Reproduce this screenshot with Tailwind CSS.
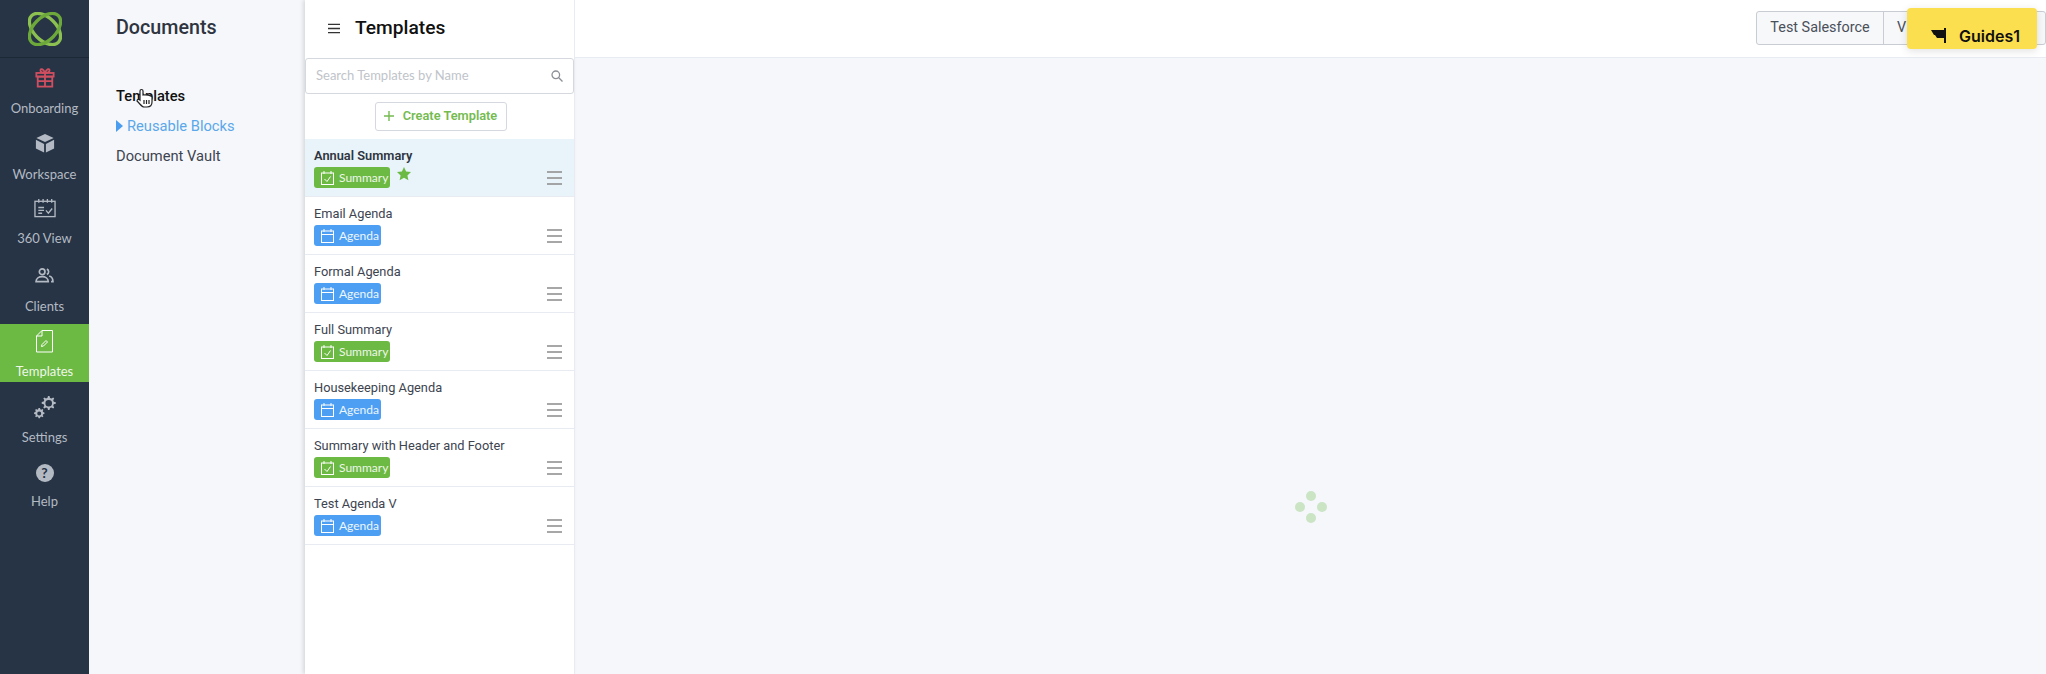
<!DOCTYPE html>
<html lang="en">
<head>
    <meta charset="UTF-8">
    <title>Templates</title>
    <script src="https://cdn.jsdelivr.net/npm/@tailwindcss/browser@4"></script>
</head>
<body class="overflow-hidden">
    <div class="relative flex h-[674px] w-[2046px] overflow-hidden bg-[#f5f7fb] font-['Roboto',sans-serif]">

        <!-- main nav -->
        <nav class="flex w-[89px] shrink-0 flex-col bg-[#263445] font-['Lato',sans-serif] text-[13px] text-[#b4bac3]">
            <div class="flex h-[58px] items-center justify-center border-b border-[#1c2836]">
                <svg width="34" height="34" viewBox="0 0 36 36" fill="none">
                    <ellipse cx="18" cy="18" rx="20" ry="12" transform="rotate(45 18 18)" stroke="#8cc152" stroke-width="3.500"/>
                    <ellipse cx="18" cy="18" rx="20" ry="12" transform="rotate(-45 18 18)" stroke="#6da83a" stroke-width="3.500"/>
                </svg>
            </div>
            <a class="flex h-[68px] flex-col items-center pt-[9px]">
                <svg width="20" height="21" viewBox="0 0 22 22" fill="none" stroke="#cf4f60" stroke-width="2">
                    <rect x="1.500" y="6" width="19" height="4"/><rect x="3" y="10" width="16" height="11"/><path d="M11 6v15M3 15h16M11 6C8 6 6 5 6 3s3-2 5 3c2-5 5-5 5-3s-2 3-5 3z"/>
                </svg>
                <span class="mt-[11px] leading-[18px]">Onboarding</span>
            </a>
            <a class="flex h-[66px] flex-col items-center pt-[7px]">
                <svg width="20" height="20" viewBox="0 0 22 22" fill="#b4bac3">
                    <path d="M11 1l9.500 4.500L11 10 1.500 5.500z"/><path d="M1 7.500l9 4.500v9.500l-9-4.500zM21 7.500L12 12v9.500l9-4.500z"/>
                </svg>
                <span class="mt-[12px] leading-[18px]">Workspace</span>
            </a>
            <a class="flex h-[66px] flex-col items-center pt-[6px]">
                <svg width="22" height="20" viewBox="0 0 23 20" fill="none" stroke="#b4bac3" stroke-width="1.400">
                    <rect x="1" y="3" width="21" height="16"/><path d="M5 0.500v4M9.500 0.500v4M14 0.500v4M18.500 0.500v4M4.500 9.500h6M4.500 12.500h6M4.500 15.500h4M12.500 12.500l2.500 3 4-5"/>
                </svg>
                <span class="mt-[11px] leading-[18px]">360 View</span>
            </a>
            <a class="flex h-[66px] flex-col items-center pt-[10px]">
                <svg width="19" height="15" viewBox="0 0 20 16" fill="none" stroke="#b4bac3" stroke-width="1.800">
                    <circle cx="7.500" cy="4" r="3"/><path d="M1 14.500c0-7 13-7 13 0zM12.500 1.200a3 3 0 010 5.600M15 8.500c2 .5 4 2 4 6h-2"/>
                </svg>
                <span class="mt-[14px] leading-[18px]">Clients</span>
            </a>
            <a class="flex h-[58px] flex-col items-center bg-[#6cb944] pt-[6px] text-white">
                <svg width="17" height="23" viewBox="0 0 17 23" fill="none" stroke="#fff" stroke-width="1">
                    <path d="M6 .5h10.500v21.500H.5V6zM6 .5V6H.5M6 14.500l4-4 1.500 1.500-4 4-2 .5z"/>
                </svg>
                <span class="mt-[9px] leading-[18px] text-[#eef7e8]">Templates</span>
            </a>
            <a class="flex h-[66px] flex-col items-center pt-[14px]">
                <svg width="23" height="23" viewBox="0 0 23 23" fill="#b4bac3">
                    <path fill-rule="evenodd" d="M15 0h1.500l.5 2 1.500.6 1.700-1 1 1-1 1.700.6 1.500 2 .5v1.500l-2 .5-.6 1.500 1 1.700-1 1-1.700-1-1.500.6-.5 2H15l-.5-2-1.500-.6-1.700 1-1-1 1-1.700-.6-1.500-2-.5V6.100l2-.5.6-1.500-1-1.700 1-1 1.700 1 1.500-.6zm.7 4a3.300 3.300 0 100 6.600 3.300 3.300 0 000-6.600z"/>
                    <path fill-rule="evenodd" d="M4.500 13h1.500l.3 1.300 1 .4 1.100-.7 1 1-.7 1.100.4 1 1.300.3v1.500l-1.300.3-.4 1 .7 1.100-1 1-1.100-.7-1 .4-.3 1.300H4.500l-.3-1.300-1-.4-1.100.7-1-1 .7-1.100-.4-1-1.300-.3v-1.500l1.300-.3.4-1-.7-1.100 1-1 1.100.7 1-.4zm.7 3.500a2 2 0 100 4 2 2 0 000-4z" transform="translate(1 -1)"/>
                </svg>
                <span class="mt-[9px] leading-[18px]">Settings</span>
            </a>
            <a class="flex h-[66px] flex-col items-center pt-[16px]">
                <span class="flex h-[18px] w-[18px] items-center justify-center rounded-full bg-[#b4bac3] text-[14px] leading-none font-bold text-[#263445]">?</span>
                <span class="mt-[10px] leading-[18px]">Help</span>
            </a>
        </nav>

        <!-- documents column -->
        <aside class="w-[216px] shrink-0 pl-[27px] text-[14.700px] text-[#3d4450]">
            <h1 class="pt-[14px] text-[19.700px] leading-[27px] font-medium text-[#2e3540]">Documents</h1>
            <ul class="mt-[40px] flex flex-col">
                <li class="h-[30px] leading-[30px] font-medium text-[#111]">Templates</li>
                <li class="flex h-[30px] items-center text-[#5aa7ea]"><span class="mr-[4px] h-0 w-0 border-y-[6px] border-l-[7px] border-y-transparent border-l-[#4a9cf0]"></span>Reusable Blocks</li>
                <li class="h-[30px] leading-[30px]">Document Vault</li>
            </ul>
        </aside>

        <!-- templates list -->
        <section class="flex w-[270px] shrink-0 flex-col border-r border-[#e8ebf1] bg-white shadow-[-2px_0_4px_rgba(0,0,0,0.12)]">
            <header class="flex h-[58px] shrink-0 items-center pb-[2px] pl-[23px]">
                <svg width="12" height="11" viewBox="0 0 13 11" stroke="#333" stroke-width="1.500"><path d="M0 1h13M0 5.500h13M0 10h13"/></svg>
                <h2 class="ml-[15px] text-[19.200px] font-medium text-[#111]">Templates</h2>
            </header>
            <div class="flex h-[36px] shrink-0 items-center justify-between rounded-[3px] border border-[#d5d8de] pr-[10px] pl-[10px] font-['Lato',sans-serif] text-[13px] text-[#c0c4ca]">
                <span>Search Templates by Name</span>
                <svg width="12" height="12" viewBox="0 0 12 12" fill="none" stroke="#8b9097" stroke-width="1.300"><circle cx="4.800" cy="4.800" r="3.800"/><path d="M7.800 7.800L11.500 11.500"/></svg>
            </div>
            <div class="flex h-[45px] shrink-0 items-center justify-center pb-[1px] pl-[2px]">
                <button class="flex h-[29px] w-[132px] items-center justify-center rounded-[3px] border border-[#d5d8de] text-[12.800px] font-semibold text-[#74bb50]">
                    <svg class="mr-[9px]" width="10" height="10" viewBox="0 0 10 10" stroke="#74bb50" stroke-width="1.400"><path d="M5 0v10M0 5h10"/></svg>
                    Create Template
                </button>
            </div>

            <ul class="text-[12.800px] text-[#3d4450]">
                <li class="flex h-[58px] items-end justify-between border-b border-[#e8ebf1] bg-[#e8f3fa] pr-[12px] pb-[8px] pl-[9px]">
                    <div>
                        <p class="mb-[1px] leading-[20px] font-semibold text-[#2e3540]">Annual Summary</p>
                        <div class="flex items-start">
                            <span class="flex h-[21px] w-[76px] items-center rounded-[3px] bg-[#6cb944] pl-[7px] font-['Lato',sans-serif] text-[12px] text-[#eef7e8]">
                                <svg class="mr-[5px]" width="13" height="14" viewBox="0 0 13 14" fill="none" stroke="#fff"><rect x=".5" y="2" width="12" height="11.500"/><path d="M3 0v3M10 0v3M3.500 8l2.500 2.500 3.500-5"/></svg>
                                Summary
                            </span>
                            <svg class="ml-[7px]" width="14" height="14" viewBox="0 0 14 14" fill="#6cb944"><path d="M7 0l2.100 4.500 4.900.6-3.600 3.300 1 4.800L7 10.800 2.600 13.200l1-4.800L0 5.100l4.900-.6z"/></svg>
                        </div>
                    </div>
                    <svg class="mb-[3px]" width="15" height="14" viewBox="0 0 15 14" stroke="#8b8b8b" stroke-width="1.300"><path d="M0 1h15M0 7h15M0 13h15"/></svg>
                </li>
                <li class="flex h-[58px] items-end justify-between border-b border-[#e8ebf1] pr-[12px] pb-[8px] pl-[9px]">
                    <div>
                        <p class="mb-[1px] leading-[20px]">Email Agenda</p>
                        <span class="flex h-[21px] w-[67px] items-center rounded-[3px] bg-[#4c9ff2] pl-[7px] font-['Lato',sans-serif] text-[12px] text-[#eef6fe]">
                            <svg class="mr-[5px]" width="13" height="14" viewBox="0 0 13 14" fill="none" stroke="#fff"><rect x=".5" y="2" width="12" height="11.500"/><path d="M3 0v3M10 0v3M.5 5.500h12"/></svg>
                            Agenda
                        </span>
                    </div>
                    <svg class="mb-[3px]" width="15" height="14" viewBox="0 0 15 14" stroke="#8b8b8b" stroke-width="1.300"><path d="M0 1h15M0 7h15M0 13h15"/></svg>
                </li>
                <li class="flex h-[58px] items-end justify-between border-b border-[#e8ebf1] pr-[12px] pb-[8px] pl-[9px]">
                    <div>
                        <p class="mb-[1px] leading-[20px]">Formal Agenda</p>
                        <span class="flex h-[21px] w-[67px] items-center rounded-[3px] bg-[#4c9ff2] pl-[7px] font-['Lato',sans-serif] text-[12px] text-[#eef6fe]">
                            <svg class="mr-[5px]" width="13" height="14" viewBox="0 0 13 14" fill="none" stroke="#fff"><rect x=".5" y="2" width="12" height="11.500"/><path d="M3 0v3M10 0v3M.5 5.500h12"/></svg>
                            Agenda
                        </span>
                    </div>
                    <svg class="mb-[3px]" width="15" height="14" viewBox="0 0 15 14" stroke="#8b8b8b" stroke-width="1.300"><path d="M0 1h15M0 7h15M0 13h15"/></svg>
                </li>
                <li class="flex h-[58px] items-end justify-between border-b border-[#e8ebf1] pr-[12px] pb-[8px] pl-[9px]">
                    <div>
                        <p class="mb-[1px] leading-[20px]">Full Summary</p>
                        <span class="flex h-[21px] w-[76px] items-center rounded-[3px] bg-[#6cb944] pl-[7px] font-['Lato',sans-serif] text-[12px] text-[#eef7e8]">
                            <svg class="mr-[5px]" width="13" height="14" viewBox="0 0 13 14" fill="none" stroke="#fff"><rect x=".5" y="2" width="12" height="11.500"/><path d="M3 0v3M10 0v3M3.500 8l2.500 2.500 3.500-5"/></svg>
                            Summary
                        </span>
                    </div>
                    <svg class="mb-[3px]" width="15" height="14" viewBox="0 0 15 14" stroke="#8b8b8b" stroke-width="1.300"><path d="M0 1h15M0 7h15M0 13h15"/></svg>
                </li>
                <li class="flex h-[58px] items-end justify-between border-b border-[#e8ebf1] pr-[12px] pb-[8px] pl-[9px]">
                    <div>
                        <p class="mb-[1px] leading-[20px]">Housekeeping Agenda</p>
                        <span class="flex h-[21px] w-[67px] items-center rounded-[3px] bg-[#4c9ff2] pl-[7px] font-['Lato',sans-serif] text-[12px] text-[#eef6fe]">
                            <svg class="mr-[5px]" width="13" height="14" viewBox="0 0 13 14" fill="none" stroke="#fff"><rect x=".5" y="2" width="12" height="11.500"/><path d="M3 0v3M10 0v3M.5 5.500h12"/></svg>
                            Agenda
                        </span>
                    </div>
                    <svg class="mb-[3px]" width="15" height="14" viewBox="0 0 15 14" stroke="#8b8b8b" stroke-width="1.300"><path d="M0 1h15M0 7h15M0 13h15"/></svg>
                </li>
                <li class="flex h-[58px] items-end justify-between border-b border-[#e8ebf1] pr-[12px] pb-[8px] pl-[9px]">
                    <div>
                        <p class="mb-[1px] leading-[20px]">Summary with Header and Footer</p>
                        <span class="flex h-[21px] w-[76px] items-center rounded-[3px] bg-[#6cb944] pl-[7px] font-['Lato',sans-serif] text-[12px] text-[#eef7e8]">
                            <svg class="mr-[5px]" width="13" height="14" viewBox="0 0 13 14" fill="none" stroke="#fff"><rect x=".5" y="2" width="12" height="11.500"/><path d="M3 0v3M10 0v3M3.500 8l2.500 2.500 3.500-5"/></svg>
                            Summary
                        </span>
                    </div>
                    <svg class="mb-[3px]" width="15" height="14" viewBox="0 0 15 14" stroke="#8b8b8b" stroke-width="1.300"><path d="M0 1h15M0 7h15M0 13h15"/></svg>
                </li>
                <li class="flex h-[58px] items-end justify-between border-b border-[#e8ebf1] pr-[12px] pb-[8px] pl-[9px]">
                    <div>
                        <p class="mb-[1px] leading-[20px]">Test Agenda V</p>
                        <span class="flex h-[21px] w-[67px] items-center rounded-[3px] bg-[#4c9ff2] pl-[7px] font-['Lato',sans-serif] text-[12px] text-[#eef6fe]">
                            <svg class="mr-[5px]" width="13" height="14" viewBox="0 0 13 14" fill="none" stroke="#fff"><rect x=".5" y="2" width="12" height="11.500"/><path d="M3 0v3M10 0v3M.5 5.500h12"/></svg>
                            Agenda
                        </span>
                    </div>
                    <svg class="mb-[3px]" width="15" height="14" viewBox="0 0 15 14" stroke="#8b8b8b" stroke-width="1.300"><path d="M0 1h15M0 7h15M0 13h15"/></svg>
                </li>
            </ul>
        </section>

        <!-- preview area -->
        <main class="flex min-w-0 flex-1 flex-col">
            <header class="flex h-[58px] shrink-0 items-start justify-end border-b border-[#e8ebf1] bg-white pt-[11px] text-[14.400px] text-[#4a505a]">
                <div class="flex h-[34px] w-[290px] rounded-[3px] border border-[#c9ccd2] bg-[#f7f8fa]">
                    <span class="flex w-[127px] items-center justify-center border-r border-[#c9ccd2]">Test Salesforce</span>
                    <span class="flex items-center pl-[13px]">V</span>
                </div>
            </header>
            <div class="flex flex-1 items-center justify-center pt-[282px]">
                <div class="grid grid-cols-3 gap-[1px] opacity-70">
                    <span></span><span class="h-[10px] w-[10px] rounded-full bg-[#b9dcae]"></span><span></span>
                    <span class="h-[10px] w-[10px] rounded-full bg-[#b9dcae]"></span><span></span><span class="h-[10px] w-[10px] rounded-full bg-[#b9dcae]"></span>
                    <span></span><span class="h-[10px] w-[10px] rounded-full bg-[#b9dcae]"></span><span></span>
                </div>
            </div>
        </main>

        <!-- guides launcher, floats over the header -->
        <button class="absolute top-[8px] left-[1907px] flex h-[41px] w-[130px] items-center rounded-[4px] bg-[#fbdf4f] pt-[14px] pl-[24px] font-['Inter',sans-serif] text-[16px] font-semibold text-[#111] shadow-[0_2px_8px_rgba(0,0,0,0.12)]">
            <svg class="mr-[12px] mt-[-2px]" width="16" height="16" viewBox="0 0 16 16" fill="#111"><path d="M0 3h13V1h2v15h-2V11H6L4 8H3z"/></svg>
            Guides1
        </button>

        <!-- mouse cursor -->
        <svg class="absolute top-[88px] left-[136px]" width="17" height="20" viewBox="0 0 17 20" fill="#fff" stroke="#222" stroke-width="1.200">
            <path d="M4 10V3c0-2 3-2 3 0v4c3-.5 8 0 9 2v5c0 3-2 5-5 5H8c-2 0-3-2-7-6 0-2 2-2 3-1z"/><path d="M8 12v4M10.500 12v4M13 12v4" fill="none"/>
        </svg>
    </div>
</body>
</html>
